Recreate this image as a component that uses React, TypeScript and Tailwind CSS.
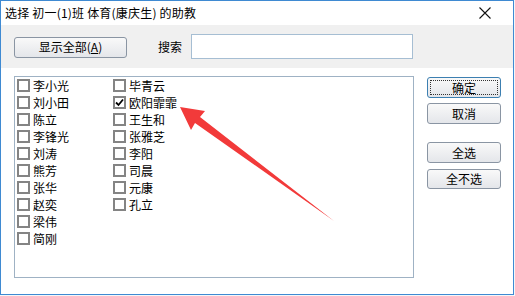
import React from 'react';

const col1 = ['李小光', '刘小田', '陈立', '李锋光', '刘涛', '熊芳', '张华', '赵奕', '梁伟', '简刚'];
const col2 = ['毕青云', '欧阳霏霏', '王生和', '张雅芝', '李阳', '司晨', '元康', '孔立'];

function CheckItem({ label, checked }: { label: string; checked?: boolean }) {
  return (
    <div className="h-[17px] flex items-center gap-[3px]">
      <div className="w-[13px] h-[13px] border-2 border-[#848484] bg-white flex items-center justify-center">
        {checked && (
          <svg width="9" height="9" viewBox="0 0 9 9">
            <path d="M1 4.5 L3.5 7 L8 1.5" fill="none" stroke="#000" strokeWidth="1.8" />
          </svg>
        )}
      </div>
      <span className="text-[12px] leading-[14px] text-black">{label}</span>
    </div>
  );
}

function WinButton({ children, className = '', focused }: { children: React.ReactNode; className?: string; focused?: boolean }) {
  return (
    <button
      className={`relative flex items-center justify-center rounded-[3px] border bg-gradient-to-b from-[#f9f9f9] to-[#e4e6ea] text-[12px] leading-[14px] text-black ${
        focused ? 'border-[#3c7fb1]' : 'border-[#8a95a3]'
      } ${className}`}
    >
      {focused && <span className="absolute inset-[2px] border border-dotted border-[#333]" />}
      {children}
    </button>
  );
}

export default function App() {
  return (
    <div className="w-[515px] h-[296px] bg-[#f4f6f9] font-['Microsoft_YaHei','Noto_Sans_CJK_SC',sans-serif]">
      <div className="relative w-[514px] h-[295px] border border-[#3f8ad2] flex flex-col bg-white">
        {/* title bar */}
        <div className="h-[24px] flex items-center justify-between pl-[4px] pr-[22px] bg-white">
          <span className="text-[12px] leading-[14px] text-black tracking-[0.2px]">选择 初一(1)班 体育(康庆生) 的助教</span>
          <svg width="12" height="12" viewBox="0 0 12 12">
            <path d="M0.5 0.5 L11.5 11.5 M11.5 0.5 L0.5 11.5" stroke="#111" strokeWidth="1.1" />
          </svg>
        </div>

        {/* toolbar */}
        <div className="h-[43px] bg-[#f0f0f0] flex items-center pl-[13px]">
          <WinButton className="w-[113px] h-[21px] mt-[1px]">
            显示全部(<span className="underline">A</span>)
          </WinButton>
          <span className="ml-[31px] text-[12px] leading-[14px] text-black">搜索</span>
          <div className="ml-[9px] w-[222px] h-[25px] border border-[#a6bed3] bg-white" />
        </div>

        {/* body */}
        <div className="flex-1 flex pl-[13px] pt-[8px]">
          <div className="w-[400px] h-[202px] border border-[#9fb2c4] bg-white flex pl-[2px]">
            <div className="w-[96px] flex flex-col">
              {col1.map((n) => (
                <CheckItem key={n} label={n} />
              ))}
            </div>
            <div className="flex flex-col">
              {col2.map((n) => (
                <CheckItem key={n} label={n} checked={n === '欧阳霏霏'} />
              ))}
            </div>
          </div>
          <div className="ml-[13px] pt-[1px] flex flex-col">
            <WinButton focused className="w-[74px] h-[21px]">确定</WinButton>
            <WinButton className="w-[74px] h-[21px] mt-[5px]">取消</WinButton>
            <WinButton className="w-[74px] h-[21px] mt-[18px]">全选</WinButton>
            <WinButton className="w-[74px] h-[20px] mt-[6px]">全不选</WinButton>
          </div>
        </div>

        {/* red annotation arrow */}
        <svg className="absolute left-[-1px] top-[-1px] pointer-events-none" width="515" height="296" viewBox="0 0 515 296">
          <polygon
            points="180,107 205,111 200,117 334,221 195,123 191,130"
            fill="#f23a3a"
          />
        </svg>
      </div>
    </div>
  );
}
